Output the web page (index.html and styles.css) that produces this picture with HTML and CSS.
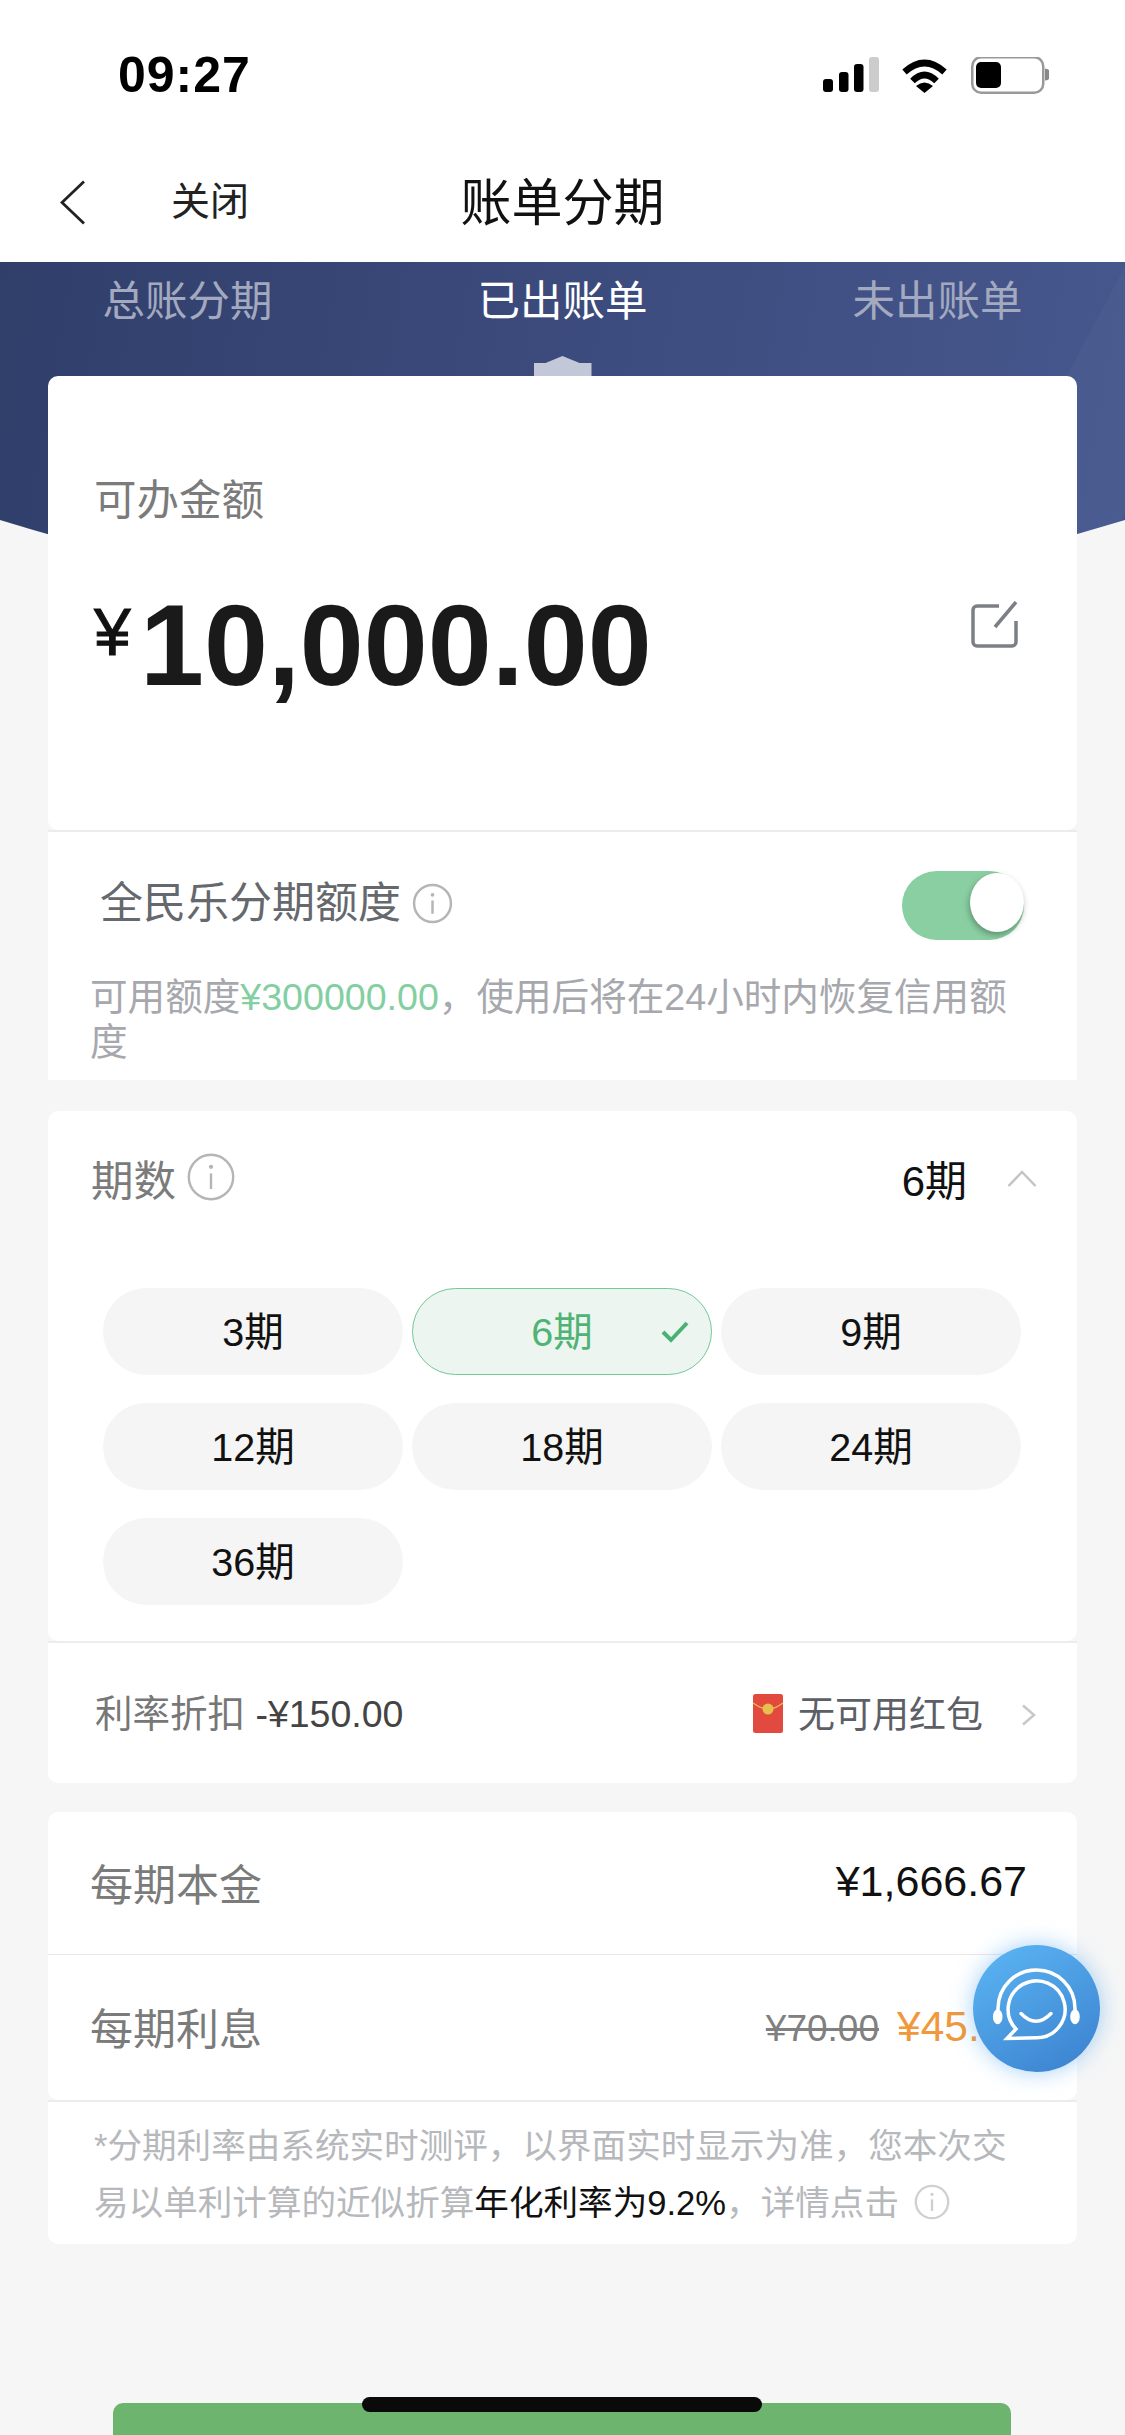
FILE: index.html
```html
<!DOCTYPE html>
<html lang="zh-CN">
<head>
<meta charset="utf-8">
<title>账单分期</title>
<link rel="stylesheet" href="styles.css">
</head>
<body>
<div class="phone">
  <header class="top">
    <div class="status">
      <span class="time">09:27</span>
      <svg class="status-icons" width="226" height="37" viewBox="0 0 226 37">
        <rect x="0" y="22" width="10" height="13" rx="3" fill="#000"/>
        <rect x="16" y="15" width="9.500" height="20" rx="3" fill="#000"/>
        <rect x="31" y="7" width="9.500" height="28" rx="3" fill="#000"/>
        <rect x="46" y="0" width="10" height="35" rx="3" fill="#ccc"/>
        <g transform="translate(78 0)">
          <path d="M3.500 15Q23.500 -3 43.500 15" fill="none" stroke="#000" stroke-width="6.500"/>
          <path d="M11.500 24Q23.500 12 35.500 24" fill="none" stroke="#000" stroke-width="6.500"/>
          <path d="M15 29Q23.500 22 32 29L23.500 36Z" fill="#000"/>
        </g>
        <rect x="149.250" y="0.250" width="71" height="35.500" rx="9" fill="none" stroke="#999" stroke-width="2.500"/>
        <rect x="153" y="5" width="25" height="26" rx="5" fill="#000"/>
        <path d="M222 11.500a6 6 0 0 1 0 12Z" fill="#888"/>
      </svg>
    </div>
    <nav class="nav">
      <svg class="back" width="26" height="45" viewBox="0 0 26 45"><path d="M24 1.500L2 22.500L24 43.500" fill="none" stroke="#222" stroke-width="2.800"/></svg>
      <span class="close">关闭</span>
      <h1 class="title">账单分期</h1>
    </nav>
  </header>

  <main class="main">
    <div class="band"></div>
    <div class="tabs">
      <div class="tab">总账分期</div>
      <div class="tab active">已出账单<i class="marker"></i></div>
      <div class="tab">未出账单</div>
    </div>

    <div class="cards">
      <section class="card amount-card">
        <div class="amount-label">可办金额</div>
        <div class="amount-row">
          <div class="amount"><span class="yen">¥</span><span class="num">10,000.00</span></div>
          <svg class="edit" width="48" height="48" viewBox="0 0 48 48"><path d="M29 5H7a4 4 0 0 0-4 4V41a4 4 0 0 0 4 4H42a4 4 0 0 0 4-4V20M46 1L25 26" fill="none" stroke="#7c8086" stroke-width="3.500"/></svg>
        </div>
      </section>

      <section class="card joined quota-card">
        <div class="quota-row">
          <div class="quota-title">全民乐分期额度
            <svg class="info info-sm" viewBox="0 0 40 40"><circle cx="20" cy="20" r="18" fill="none" stroke="#b5b5b5" stroke-width="2.400"/><circle cx="20" cy="11.500" r="1.800" fill="#b5b5b5"/><path d="M20 17V30" stroke="#b5b5b5" stroke-width="2.400"/></svg>
          </div>
          <div class="toggle"><i class="knob"></i></div>
        </div>
        <p class="quota-note">可用额度<span class="green">¥300000.00</span>，使用后将在24小时内恢复信用额度</p>
      </section>

      <section class="card term-card">
        <div class="term-head">
          <div class="term-label">期数
            <svg class="info info-lg" viewBox="0 0 40 40"><circle cx="20" cy="20" r="18.500" fill="none" stroke="#b5b5b5" stroke-width="2"/><circle cx="20" cy="11.500" r="1.800" fill="#b5b5b5"/><path d="M20 17V30" stroke="#b5b5b5" stroke-width="2"/></svg>
          </div>
          <div class="term-value">6期
            <svg class="chev-up" width="30" height="17" viewBox="0 0 30 17"><path d="M1.500 16L15 2L28.500 16" fill="none" stroke="#c4c4c4" stroke-width="2.500"/></svg>
          </div>
        </div>
        <div class="pills">
          <div class="pill">3期</div>
          <div class="pill selected">6期
            <svg class="check" width="28" height="22" viewBox="0 0 28 22"><path d="M2 11L10 19L26 2" fill="none" stroke="#49b173" stroke-width="4"/></svg>
          </div>
          <div class="pill">9期</div>
          <div class="pill">12期</div>
          <div class="pill">18期</div>
          <div class="pill">24期</div>
          <div class="pill">36期</div>
        </div>
      </section>

      <section class="card joined discount-row">
        <div class="discount"><span class="muted">利率折扣</span> <span class="discount-val">-¥150.00</span></div>
        <div class="packet">
          <svg class="envelope" width="30" height="39" viewBox="0 0 30 39"><rect width="30" height="39" rx="2.500" fill="#e2493f"/><path d="M0 9Q8 15 15 15Q22 15 30 9" fill="none" stroke="#ecc14f" stroke-width="1.200"/><circle cx="15" cy="15" r="5.500" fill="#e8bf4d"/></svg>
          <span class="packet-text">无可用红包</span>
          <svg class="chev-right" width="15" height="22" viewBox="0 0 15 22"><path d="M2 1.500L13 11L2 20.500" fill="none" stroke="#c8c8c8" stroke-width="2.500"/></svg>
        </div>
      </section>

      <section class="card pay-card">
        <div class="pay-row"><span class="pay-label">每期本金</span><span class="pay-val">¥1,666.67</span></div>
        <div class="pay-row with-line"><span class="pay-label">每期利息</span><span class="pay-val"><s class="old">¥70.00</s><span class="orange">¥45.00</span></span></div>
      </section>

      <section class="card joined foot-card">
        <p class="foot">*分期利率由系统实时测评，以界面实时显示为准，您本次交易以单利计算的近似折算<span class="strong">年化利率为9.2%</span>，详情点击
          <svg class="info info-foot" viewBox="0 0 40 40"><circle cx="20" cy="20" r="18" fill="none" stroke="#d0d0d0" stroke-width="2.600"/><circle cx="20" cy="11.500" r="1.800" fill="#cfcfcf"/><path d="M20 17V30" stroke="#cfcfcf" stroke-width="2.600"/></svg>
        </p>
      </section>
    </div>

    <button class="submit" type="button"></button>
  </main>

  <div class="chat">
    <svg width="127" height="127" viewBox="0 0 127 127">
      <path d="M25 68V63.500C25 42 42 25 63.500 25S102 42 102 63.500V68" fill="none" stroke="#fff" stroke-width="3.500"/>
      <ellipse cx="24.700" cy="71.700" rx="4.800" ry="7.500" fill="#fff"/>
      <ellipse cx="102" cy="71.700" rx="4.800" ry="7.500" fill="#fff"/>
      <path d="M34 93.500L43 84A28.500 28.500 0 1 1 63.500 92.800Z" fill="none" stroke="#fff" stroke-width="3.500" stroke-linejoin="miter"/>
      <path d="M48 68.500Q63 84 78 68.500" fill="none" stroke="#fff" stroke-width="3.500" stroke-linecap="round"/>
    </svg>
  </div>
  <div class="home-bar"></div>
</div>
</body>
</html>
```
FILE: styles.css
```css
* { box-sizing: border-box; }
html, body { margin: 0; padding: 0; }
body {
  background: #f6f6f6;
  font-family: "Liberation Sans", "Noto Sans CJK SC", sans-serif;
  color: #111;
}
.phone {
  position: relative;
  width: 1125px;
  height: 2435px;
  overflow: hidden;
  background: #f6f6f6;
}
.top { background: #fff; height: 262px; }
.status {
  height: 135px;
  padding: 0 76px 0 118px;
  display: flex;
  justify-content: space-between;
  align-items: flex-start;
}
.time {
  margin-top: 46px;
  font-size: 50px;
  line-height: 58px;
  font-weight: 700;
  letter-spacing: 1px;
  color: #000;
}
.status-icons { margin-top: 57px; }
.nav {
  position: relative;
  height: 127px;
  display: flex;
  align-items: center;
  padding: 7px 0 0 60px;
}
.back { flex: none; }
.close {
  margin-left: 85px;
  font-size: 39px;
  line-height: 50px;
  color: #222;
}
.title {
  position: absolute;
  left: 0;
  right: 0;
  top: 0;
  margin: 0;
  text-align: center;
  font-size: 51px;
  font-weight: 400;
  line-height: 138px;
  color: #111;
  pointer-events: none;
}
.main { position: relative; }
.band {
  position: absolute;
  top: 0;
  left: 0;
  width: 1125px;
  height: 350px;
  background:
    linear-gradient(118deg, transparent 86%, rgba(255,255,255,.025) 86%, rgba(255,255,255,.025) 96%, transparent 96%),
    linear-gradient(100deg, #303e6a 0%, #3b4a7b 45%, #47588f 100%);
  clip-path: path("M0 0H1125V258Q562 432 0 258Z");
}
.tabs {
  position: relative;
  display: grid;
  grid-template-columns: repeat(3, 1fr);
  height: 114px;
}
.tab {
  display: flex;
  flex-direction: column;
  align-items: center;
  font-size: 42.500px;
  line-height: 79px;
  color: #a3a9bf;
}
.tab.active { color: #fff; }
.marker {
  display: block;
  width: 58px;
  height: 20px;
  margin-top: 15px;
  background: #c3c8d9;
  clip-path: polygon(0 7px, 12px 7px, 29px 0, 46px 7px, 100% 7px, 100% 100%, 0 100%);
}
.cards {
  position: relative;
  padding: 0 48px;
}
.card {
  background: #fff;
  border-radius: 10px;
  margin-top: 31px;
}
.card.joined {
  margin-top: 0;
  border-top: 2px solid #ececec;
}
.tabs + .cards .card:first-child { margin-top: 0; }
.amount-card { height: 454px; padding: 95px 59px 0 46px; }
.amount-label {
  font-size: 42.500px;
  line-height: 60px;
  color: #7b7b7b;
}
.amount-row {
  display: flex;
  justify-content: space-between;
  align-items: flex-start;
  margin-top: 49px;
}
.amount { display: flex; align-items: flex-start; }
.yen {
  margin-top: 14px;
  font-size: 66px;
  line-height: 76px;
  font-weight: 400;
  color: #111;
  width: 46px;
  -webkit-text-stroke: 1px #111;
}
.num {
  font-size: 115px;
  line-height: 130px;
  font-weight: 700;
  color: #1a1a1a;
}
.edit { margin-top: 21px; }
.quota-card { height: 250px; border-radius: 0; padding: 0 53px 0 42px; }
.quota-row {
  display: flex;
  justify-content: space-between;
  align-items: flex-start;
  padding-left: 10px;
}
.quota-title {
  display: flex;
  align-items: center;
  gap: 11px;
  margin-top: 41px;
  font-size: 43px;
  line-height: 60px;
  color: #65686d;
}
.info { flex: none; display: inline-block; }
.info-sm { width: 41px; height: 41px; }
.toggle {
  position: relative;
  width: 122px;
  height: 69px;
  margin-top: 39px;
  border-radius: 35px;
  background: #8acfa2;
}
.knob {
  position: absolute;
  right: 0;
  top: 2px;
  width: 54px;
  height: 59px;
  border-radius: 50%;
  background: #fff;
  box-shadow: -1px 3px 6px rgba(0,0,0,.3);
}
.quota-note {
  margin: 35px 0 0;
  font-size: 37.600px;
  line-height: 45px;
  color: #a6a8ad;
}
.green { color: #83cfa1; }
.term-card { height: 530px; padding: 0 40px 0 43px; }
.term-head {
  height: 134px;
  padding-bottom: 2px;
  display: flex;
  justify-content: space-between;
  align-items: center;
}
.term-label {
  display: flex;
  align-items: center;
  gap: 11px;
  font-size: 42.500px;
  color: #7b7b7b;
}
.info-lg { width: 48px; height: 48px; }
.term-value {
  display: flex;
  align-items: center;
  gap: 40px;
  font-size: 42px;
  color: #111;
}
.chev-up { margin-top: 2px; }
.pills {
  display: grid;
  grid-template-columns: repeat(3, 300px);
  column-gap: 9px;
  row-gap: 28px;
  margin: 43px 0 0 12px;
}
.pill {
  position: relative;
  height: 87px;
  border-radius: 44px;
  background: #f5f5f5;
  font-size: 39.500px;
  line-height: 89px;
  text-align: center;
  color: #111;
}
.pill.selected {
  background: #edf5f0;
  border: 1.500px solid #72c996;
  line-height: 86px;
  color: #4fb375;
}
.check {
  position: absolute;
  right: 22px;
  top: 32px;
}
.discount-row {
  height: 142px;
  border-radius: 0 0 10px 10px;
  display: flex;
  justify-content: space-between;
  align-items: center;
  padding: 0 41px 0 47px;
}
.discount { font-size: 37.500px; margin-bottom: 5px; }
.muted { color: #777; }
.discount-val { color: #444; }
.packet { display: flex; align-items: center; }
.packet-text {
  margin: 0 0 2px 15px;
  font-size: 37px;
  color: #5c6066;
}
.chev-right { margin: 3px 0 0 38px; }
.pay-card { height: 288px; margin-top: 29px; }
.pay-row {
  height: 142px;
  padding: 0 50px 3px 42px;
  display: flex;
  justify-content: space-between;
  align-items: center;
}
.pay-row.with-line { height: 146px; border-top: 1px solid #e8e8e8; }
.pay-label { font-size: 43px; color: #7b7b7b; }
.pay-val { font-size: 43px; color: #111; }
.old {
  margin-right: 18px;
  font-size: 37px;
  color: #808080;
}
.orange { color: #f0983a; font-size: 42.500px; }
.foot-card { height: 144px; padding: 0 60px 0 46px; border-radius: 0 0 10px 10px; }
.foot {
  margin: 16px 0 0;
  font-size: 34.600px;
  line-height: 57px;
  color: #b6b8bc;
}
.strong { color: #111; }
.info-foot { width: 36px; height: 36px; vertical-align: -5px; margin-left: 5px; }
.submit {
  display: block;
  width: 898px;
  height: 100px;
  margin: 159px 0 0 113px;
  padding: 0;
  border: 0;
  border-radius: 10px;
  background: #6db56e;
}
.chat {
  position: absolute;
  left: 973px;
  top: 1945px;
  width: 127px;
  height: 127px;
  border-radius: 50%;
  background: linear-gradient(150deg, #5cb7f5 0%, #3a7fcd 100%);
  box-shadow: 0 0 22px rgba(90,170,240,.55);
}
.chat svg { display: block; }
.home-bar {
  position: absolute;
  left: 362px;
  top: 2397px;
  width: 400px;
  height: 15px;
  border-radius: 8px;
  background: #0a0a0a;
}
```
